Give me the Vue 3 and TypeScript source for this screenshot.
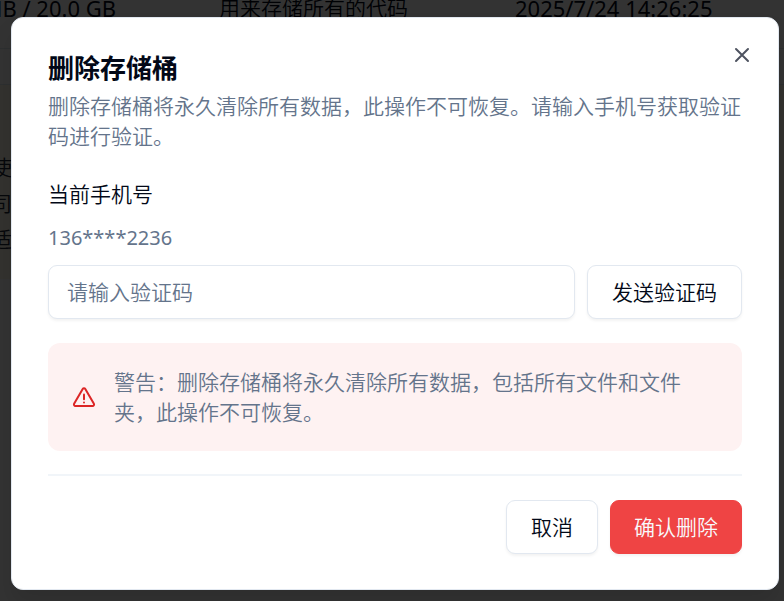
<script setup lang="ts">
import { ref } from 'vue'

const phone = '136****2236'
const code = ref('')
const notes = ['使', '司', '适']
</script>

<template>
  <div class="page">
    <div class="backdrop" aria-hidden="true">
      <div class="row">
        <span class="usage">MB / 20.0 GB</span>
        <span>用来存储所有的代码</span>
        <span class="date">2025/7/24 14:26:25</span>
      </div>
      <div class="band"></div>
      <div class="notice">
        <p v-for="note in notes" :key="note">{{ note }}</p>
      </div>
    </div>
    <div class="overlay">
      <section class="dialog" role="dialog" aria-modal="true" aria-labelledby="dialog-title" aria-describedby="dialog-text">
        <button class="close" type="button" aria-label="关闭">
          <svg viewBox="0 0 24 24" width="24" height="24" fill="none" stroke="currentColor" stroke-width="2" stroke-linecap="round" stroke-linejoin="round">
            <path d="M18 6 6 18M6 6l12 12" />
          </svg>
        </button>
        <header>
          <h2 id="dialog-title">删除存储桶</h2>
          <p id="dialog-text">删除存储桶将永久清除所有数据，此操作不可恢复。请输入手机号获取验证码进行验证。</p>
        </header>
        <form @submit.prevent>
          <label for="code">当前手机号</label>
          <p class="phone">{{ phone }}</p>
          <div class="code-row">
            <input id="code" v-model="code" type="text" placeholder="请输入验证码" />
            <button class="btn" type="button">发送验证码</button>
          </div>
          <div class="warning" role="alert">
            <svg viewBox="0 0 24 24" width="24" height="24" fill="none" stroke="#dc2626" stroke-width="2" stroke-linecap="round" stroke-linejoin="round">
              <path d="M10.7 3.9 2.1 18.8a1.5 1.5 0 0 0 1.3 2.2h17.2a1.5 1.5 0 0 0 1.3-2.2L13.3 3.9a1.5 1.5 0 0 0-2.6 0Z" />
              <path d="M12 9.6v4.6" />
              <path d="M12 17.4v.1" />
            </svg>
            <p>警告：删除存储桶将永久清除所有数据，包括所有文件和文件夹，此操作不可恢复。</p>
          </div>
          <footer>
            <button class="btn" type="button">取消</button>
            <button class="btn danger" type="submit">确认删除</button>
          </footer>
        </form>
      </section>
    </div>
  </div>
</template>

<style>
body {
  margin: 0;
}
</style>

<style scoped>
* {
  box-sizing: border-box;
}
.page {
  position: relative;
  min-height: 100vh;
  overflow: hidden;
  background: #fff;
  color: #020817;
  font-family: "Noto Sans", "Noto Sans CJK SC", sans-serif;
  font-size: 21px;
  line-height: 30px;
  font-weight: 350;
}
h2,
p {
  margin: 0;
}
.backdrop {
  position: absolute;
  inset: 0;
  overflow: hidden;
  white-space: nowrap;
}
.row {
  display: grid;
  grid-template-columns: 219px 296px 1fr;
  height: 49px;
  padding-bottom: 24px;
  align-items: center;
  align-content: end;
  border-bottom: 1px solid #e2e8f0;
  line-height: 32px;
}
.usage {
  display: flex;
  justify-content: flex-end;
  padding-right: 103px;
}
.usage,
.date {
  font-size: 22px;
  font-weight: 400;
}
.band {
  height: 36px;
  border-bottom: 1px solid #e2e8f0;
}
.notice {
  height: 194px;
  padding-top: 64px;
  background: #fffbeb;
  color: #1e293b;
  line-height: 36px;
}
.notice p {
  width: 12px;
  display: flex;
  justify-content: flex-end;
}
.overlay {
  position: relative;
  display: flex;
  min-height: 100vh;
  padding: 17px 5px 11px 11px;
  background: rgb(0 0 0 / 80%);
}
.dialog {
  position: relative;
  flex: 1;
  padding: 35px 36px;
  border: 1px solid #e2e8f0;
  border-radius: 12px;
  background: #fff;
  box-shadow: 0 15px 22px rgb(0 0 0 / 10%);
}
.close {
  position: absolute;
  top: 25px;
  right: 24px;
  display: flex;
  padding: 0;
  border: 0;
  background: none;
  color: #4e5360;
}
header {
  display: grid;
  gap: 8px;
}
h2 {
  font-size: 26px;
  line-height: 30px;
  font-weight: 700;
}
header p,
.phone,
.warning p {
  color: #64748b;
}
form {
  display: flex;
  flex-direction: column;
}
label {
  margin-top: 28px;
}
.phone {
  margin-top: 14px;
  font-size: 20px;
  font-weight: 400;
}
.code-row {
  display: flex;
  gap: 12px;
  margin-top: 12px;
}
input,
.btn {
  height: 54px;
  border: 1px solid #e2e8f0;
  border-radius: 9px;
  background: #fff;
  color: #020817;
  font: inherit;
  box-shadow: 0 2px 3px rgb(0 0 0 / 5%);
}
input {
  flex: 1;
  min-width: 0;
  padding: 0 18px;
}
input::placeholder {
  color: #64748b;
  opacity: 1;
}
.btn {
  padding: 0 24px;
}
.warning {
  display: flex;
  align-items: center;
  gap: 18px;
  margin-top: 24px;
  padding: 24px;
  border-radius: 12px;
  background: #fef2f2;
}
.warning svg {
  flex: none;
}
.warning p {
  max-width: 580px;
}
footer {
  display: flex;
  justify-content: flex-end;
  gap: 12px;
  margin-top: 23px;
  padding-top: 24px;
  border-top: 2px solid #f1f5f9;
}
.btn.danger {
  padding: 0 23px;
  border-color: #ef4444;
  background: #ef4444;
  color: #f8fafc;
}
</style>
